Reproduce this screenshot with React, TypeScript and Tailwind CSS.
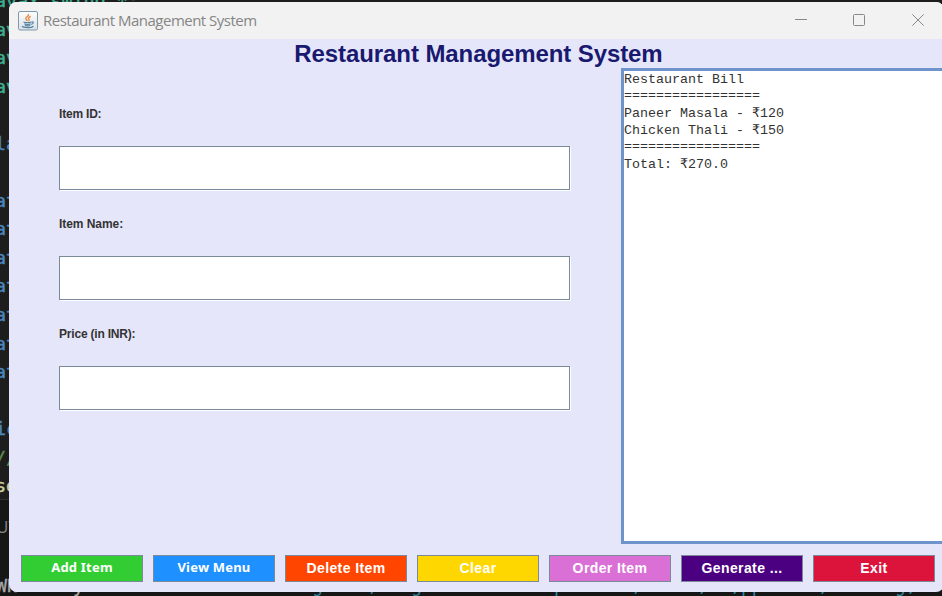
import React from "react";

const codeLines: { text: string; color: string }[] = [
  { text: "avax.swing.*;", color: "text-[#3fae90]" },
  { text: "ava", color: "text-[#3fae90]" },
  { text: "ava", color: "text-[#3fae90]" },
  { text: "ava", color: "text-[#3fae90]" },
  { text: "", color: "" },
  { text: "lass", color: "text-[#4a86bd]" },
  { text: "", color: "" },
  { text: "ate", color: "text-[#4a86bd]" },
  { text: "ate", color: "text-[#4a86bd]" },
  { text: "ate", color: "text-[#4a86bd]" },
  { text: "ate", color: "text-[#4a86bd]" },
  { text: "ate", color: "text-[#4a86bd]" },
  { text: "ate", color: "text-[#4a86bd]" },
  { text: "ate", color: "text-[#4a86bd]" },
  { text: "", color: "" },
  { text: "ic ", color: "text-[#4a86bd]" },
  { text: "//", color: "text-[#5d8a4a]" },
  { text: "set", color: "text-[#cfcf9c]" },
];

const fields = [
  { label: "Item ID:", spacing: "tracking-[-0.2px]" },
  { label: "Item Name:", spacing: "tracking-[-0.05px]" },
  { label: "Price (in INR):", spacing: "tracking-[-0.2px]" },
];

const humanist = "font-['Noto_Sans',sans-serif] text-[13px] pb-[1px] tracking-[0.2px]";
const grotesque = "font-['Liberation_Sans',Arial,sans-serif] text-[14px] tracking-[0.4px]";

const buttons = [
  { label: "Add Item", color: "bg-[#32cd32]", face: humanist },
  { label: "View Menu", color: "bg-[#1e90ff]", face: humanist },
  { label: "Delete Item", color: "bg-[#ff4500]", face: grotesque },
  { label: "Clear", color: "bg-[#ffd700]", face: grotesque },
  { label: "Order Item", color: "bg-[#da70d6]", face: grotesque },
  { label: "Generate ...", color: "bg-[#4b0082]", face: grotesque },
  { label: "Exit", color: "bg-[#dc143c]", face: grotesque },
];

const bill = [
  "Restaurant Bill",
  "=================",
  "Paneer Masala - ₹120",
  "Chicken Thali - ₹150",
  "=================",
  "Total: ₹270.0",
];

function JavaIcon() {
  return (
    <svg width="20" height="20" viewBox="0 0 20 20" fill="none">
      <defs>
        <linearGradient id="tile" x1="0" y1="0" x2="0" y2="1">
          <stop stopColor="#fdfdfd" />
          <stop offset="1" stopColor="#d8e1e8" />
        </linearGradient>
      </defs>
      <rect x="0.5" y="0.5" width="19" height="18.500" rx="1.500" fill="url(#tile)" stroke="#7f99ac" />
      <path d="M10.500 3c1 2-3.200 2.900-2.700 4.900.2.900 1.300 1.300 1.500 2.200M12.700 5.300c-2.200 1-2.900 1.900-1.800 3 .5.600.2 1.300-.4 1.900" stroke="#e68a45" strokeWidth="1.400" />
      <path d="M5.500 11c1.600.9 6 .9 7.800 0M6.300 12.700c1.500.8 4.900.8 6.400 0M7 14.200c1.300.6 3.900.6 5.200 0M4 15.200c1.500 1.800 9.500 1.800 11.500 0M13.500 11c2.500-.5 2.400 1.900-.3 2.400" stroke="#55809f" strokeWidth="1.200" />
    </svg>
  );
}

function TitleBar() {
  return (
    <header className="flex h-[37px] shrink-0 items-center bg-[#f2f2f2] pl-[9px]">
      <JavaIcon />
      <span className="ml-[5px] font-['Open_Sans',sans-serif] text-[15px] tracking-[-0.51px] text-[#858585]">
        Restaurant Management System
      </span>
      <div className="mb-[2px] ml-auto flex items-center gap-[47px] pr-[20px] text-[#888888]">
        <svg className="translate-x-[1px]" width="12" height="12" viewBox="0 0 12 12" stroke="currentColor"><path d="M0 5.500h12" /></svg>
        <svg width="12" height="12" viewBox="0 0 12 12" fill="none" stroke="currentColor"><rect x="0.500" y="0.500" width="11" height="11" rx="1" /></svg>
        <svg width="12" height="12" viewBox="0 0 12 12" stroke="currentColor"><path d="M0.300 0.300l11.400 11.400M11.700 0.300L0.300 11.700" /></svg>
      </div>
    </header>
  );
}

export default function App() {
  return (
    <div className="relative flex h-[596px] w-[942px] flex-col overflow-hidden bg-[#1d1d1d]">
      <div className="-mt-[13px] h-[512px] font-['DejaVu_Sans_Mono',monospace] text-[18.400px] leading-[28.55px] [-webkit-text-stroke:0.4px]">
        {codeLines.map((line, i) => (
          <div key={i} className={`-ml-[5px] h-[28.55px] whitespace-pre ${line.color}`}>{line.text}</div>
        ))}
      </div>
      <div className="flex flex-1 flex-col justify-between border-t border-[#303030] bg-[#161616] pt-[15px]">
        <div className="-ml-[4px] font-['Open_Sans',sans-serif] text-[17px] leading-[24px] text-[#858585]">UTPUT</div>
        <div className="-ml-[4px] flex h-[20px] whitespace-pre font-['DejaVu_Sans_Mono',monospace] text-[18.270px] leading-[20px] text-[#2e86a0]">
          <span className="w-[316px] text-[#a9a9a9] [-webkit-text-stroke:0.3px]">WN     y</span>
          <span>g    ,   g            p      ,     ,  ,pp     ,      g,</span>
        </div>
      </div>

      <div className="absolute left-[9px] top-[2px] flex h-[590px] w-[935px] flex-col overflow-hidden rounded-[8px] bg-[#e6e6fa]">
        <TitleBar />
        <h1 className="h-[29px] shrink-0 pl-[4px] text-center font-['Liberation_Sans',Arial,sans-serif] text-[24px] leading-[30px] font-bold tracking-[-0.09px] text-[#191970]">
          Restaurant Management System
        </h1>
        <main className="flex h-[476px] shrink-0">
          <form className="flex w-[612px] flex-col pl-[50px] pt-[24px]">
            {fields.map((field) => (
              <label key={field.label} className={`flex h-[110px] flex-col font-['Liberation_Sans',Arial,sans-serif] text-[12px] leading-[44px] font-bold text-[#333333] ${field.spacing}`}>
                {field.label}
                <input className="mt-[10px] h-[44px] w-[511px] border border-[#7a8a99] bg-white shadow-[1px_1px_0_#fff] outline-none" />
              </label>
            ))}
          </form>
          <section className="flex-1 border-[3px] border-r-0 border-[#6f94cc] bg-white font-['Liberation_Mono','Courier_New',monospace] text-[13.330px] leading-[17px] text-[#333333]">
            {bill.map((line, i) => (
              <div key={i} className={line.startsWith("=") ? "-mt-[1px] mb-[1px] h-[17px] whitespace-pre" : "h-[17px] whitespace-pre"}>{line}</div>
            ))}
          </section>
        </main>
        <footer className="flex gap-[10px] px-[12px] pt-[11px]">
          {buttons.map((b) => (
            <button key={b.label} className={`flex h-[27px] w-[122px] shrink-0 items-center justify-center border border-[#7a8a99] font-bold text-white ${b.face} ${b.color}`}>
              {b.label}
            </button>
          ))}
        </footer>
      </div>
    </div>
  );
}
